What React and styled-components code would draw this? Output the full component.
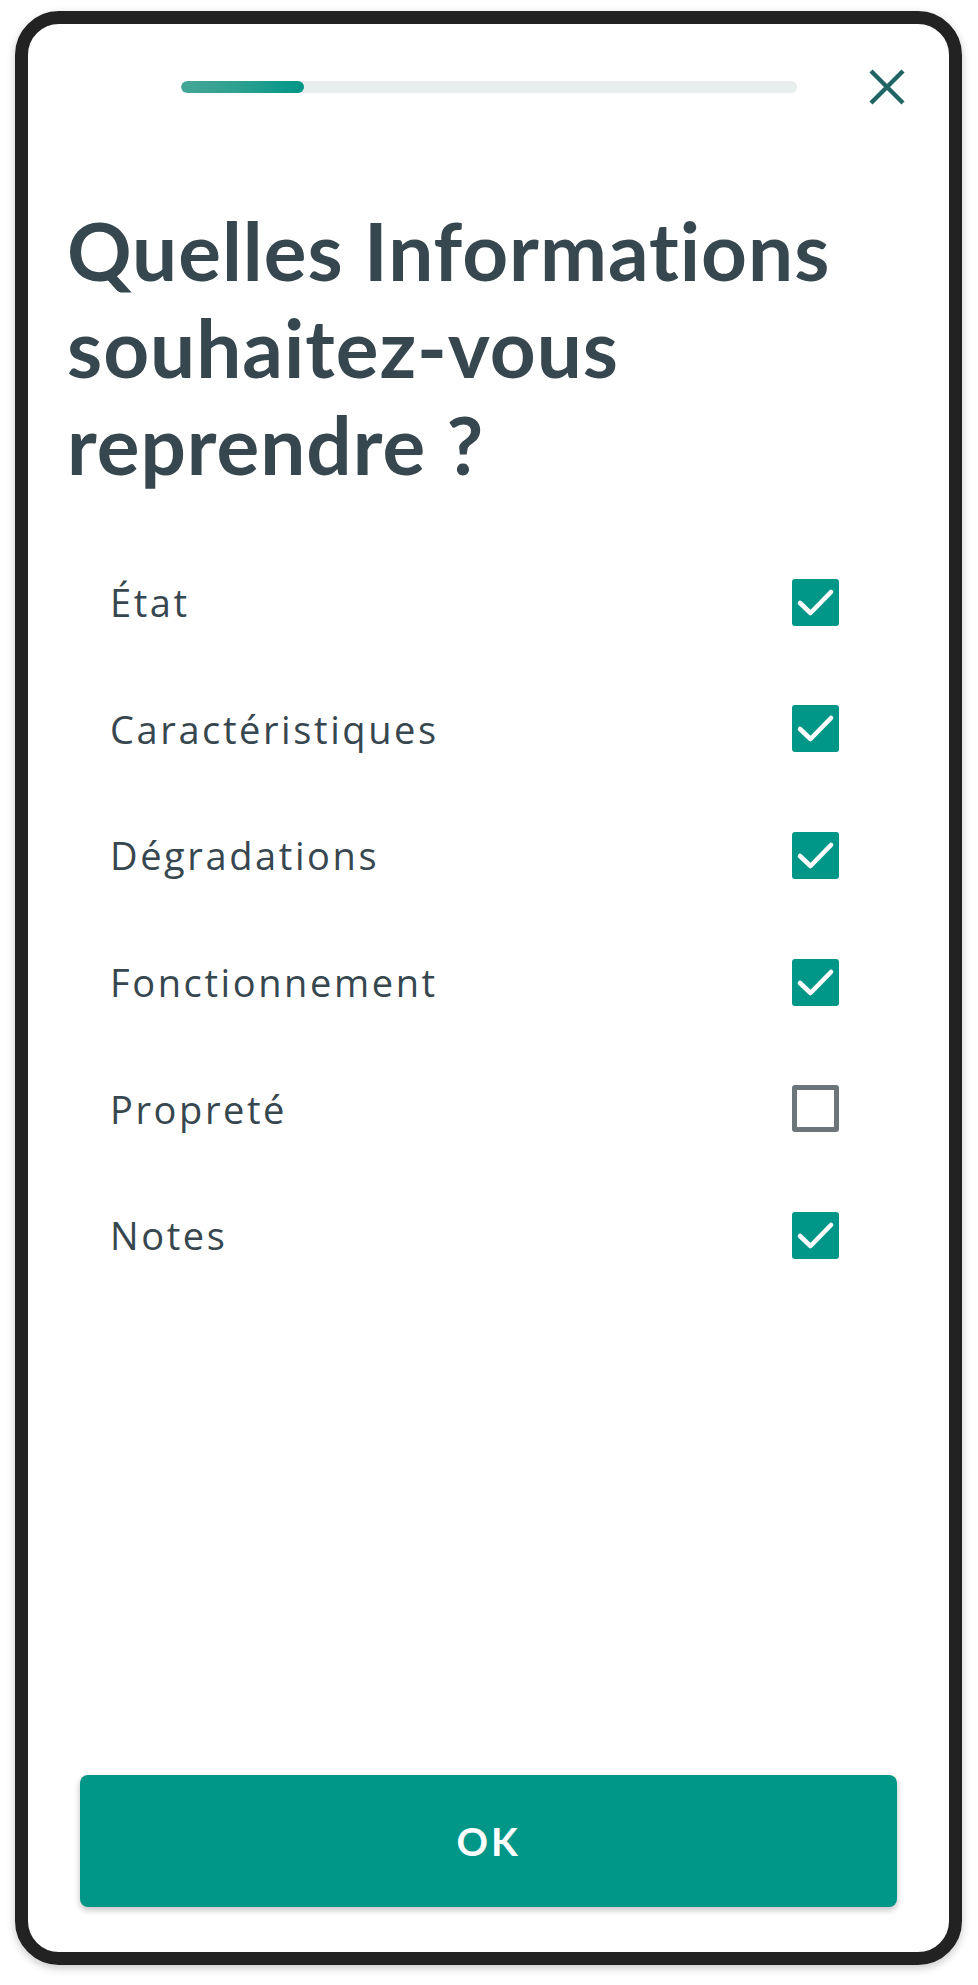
import styled, { createGlobalStyle } from 'styled-components'

const GlobalStyle = createGlobalStyle`
    html, body {
        margin: 0;
        padding: 0;
        background: #ffffff;
    }
    * {
        box-sizing: border-box;
    }
`

const Page = styled.div`
    padding: 11px 16px 20px 15px;
`

const Frame = styled.div`
    height: 1954px;
    border: 13px solid #222222;
    border-radius: 44px;
    background: #ffffff;
    box-shadow: 0 3px 9px rgba(0, 0, 0, 0.22);
    display: flex;
    flex-direction: column;
    overflow: hidden;
`

const Header = styled.div`
    display: grid;
    grid-template-columns: 1fr 616px 1fr;
    align-items: center;
    height: 36px;
    margin-top: 45px;
`

const Track = styled.div`
    grid-column: 2;
    height: 12px;
    border-radius: 6px;
    background: #e8eded;
    overflow: hidden;
`

const Fill = styled.div`
    height: 100%;
    border-radius: 6px;
    background: linear-gradient(90deg, #45a697 0%, #2ea190 45%, #009688 100%);
`

const Close = styled.button`
    grid-column: 3;
    justify-self: start;
    margin-left: 72px;
    width: 36px;
    height: 36px;
    padding: 0;
    border: none;
    background: none;
    cursor: pointer;
    display: flex;
`

const Title = styled.h1`
    margin: 97px 0 0 39px;
    font-family: Lato, "Open Sans", sans-serif;
    font-weight: 700;
    font-size: 80px;
    line-height: 97px;
    letter-spacing: 1px;
    font-variant-ligatures: none;
    color: #37474f;
`

const List = styled.ul`
    list-style: none;
    margin: 46px 0 0;
    padding: 0 110px 0 82px;
`

const Row = styled.li`
    height: 126.6px;
    display: flex;
    align-items: center;
    justify-content: space-between;
`

const Label = styled.span`
    font-family: "Open Sans", Lato, sans-serif;
    font-weight: 500;
    font-size: 38px;
    letter-spacing: 2.6px;
    color: #37474f;
`

const Box = styled.span`
    width: 47px;
    height: 47px;
    border-radius: 3px;
    display: flex;
    background: ${props => (props.checked ? '#009688' : '#ffffff')};
    border: ${props => (props.checked ? 'none' : '5px solid #6c7579')};
`

const Spacer = styled.div`
    flex: 1;
`

const OkButton = styled.button`
    margin: 0 52px 45px;
    height: 132px;
    border: none;
    border-radius: 8px;
    background: #009688;
    box-shadow: 0 3px 6px rgba(0, 0, 0, 0.25);
    color: #ffffff;
    font-family: Lato, "Open Sans", sans-serif;
    font-weight: 700;
    font-size: 39px;
    letter-spacing: 3px;
    cursor: pointer;
`

const items = [
    { label: 'État', checked: true },
    { label: 'Caractéristiques', checked: true },
    { label: 'Dégradations', checked: true },
    { label: 'Fonctionnement', checked: true },
    { label: 'Propreté', checked: false },
    { label: 'Notes', checked: true },
]

const Check = () => (
    <svg width="47" height="47" viewBox="0 0 47 47">
        <polyline points="8,24 18.5,34 39,13" fill="none" stroke="#ffffff" strokeWidth="4.6" strokeLinecap="round" strokeLinejoin="round" />
    </svg>
)

const App = () => {
    return (
        <Page>
            <GlobalStyle />
            <Frame>
                <Header>
                    <Track>
                        <Fill style={{ width: '20%' }} />
                    </Track>
                    <Close aria-label="Fermer">
                        <svg width="36" height="36" viewBox="0 0 36 36">
                            <path d="M2 2 L34 34 M34 2 L2 34" stroke="#1f6563" strokeWidth="4.4" />
                        </svg>
                    </Close>
                </Header>
                <Title>
                    Quelles Informations<br />souhaitez-vous<br />reprendre ?
                </Title>
                <List>
                    {items.map(item => (
                        <Row key={item.label}>
                            <Label>{item.label}</Label>
                            <Box checked={item.checked}>{item.checked && <Check />}</Box>
                        </Row>
                    ))}
                </List>
                <Spacer />
                <OkButton>OK</OkButton>
            </Frame>
        </Page>
    )
}

export default App
